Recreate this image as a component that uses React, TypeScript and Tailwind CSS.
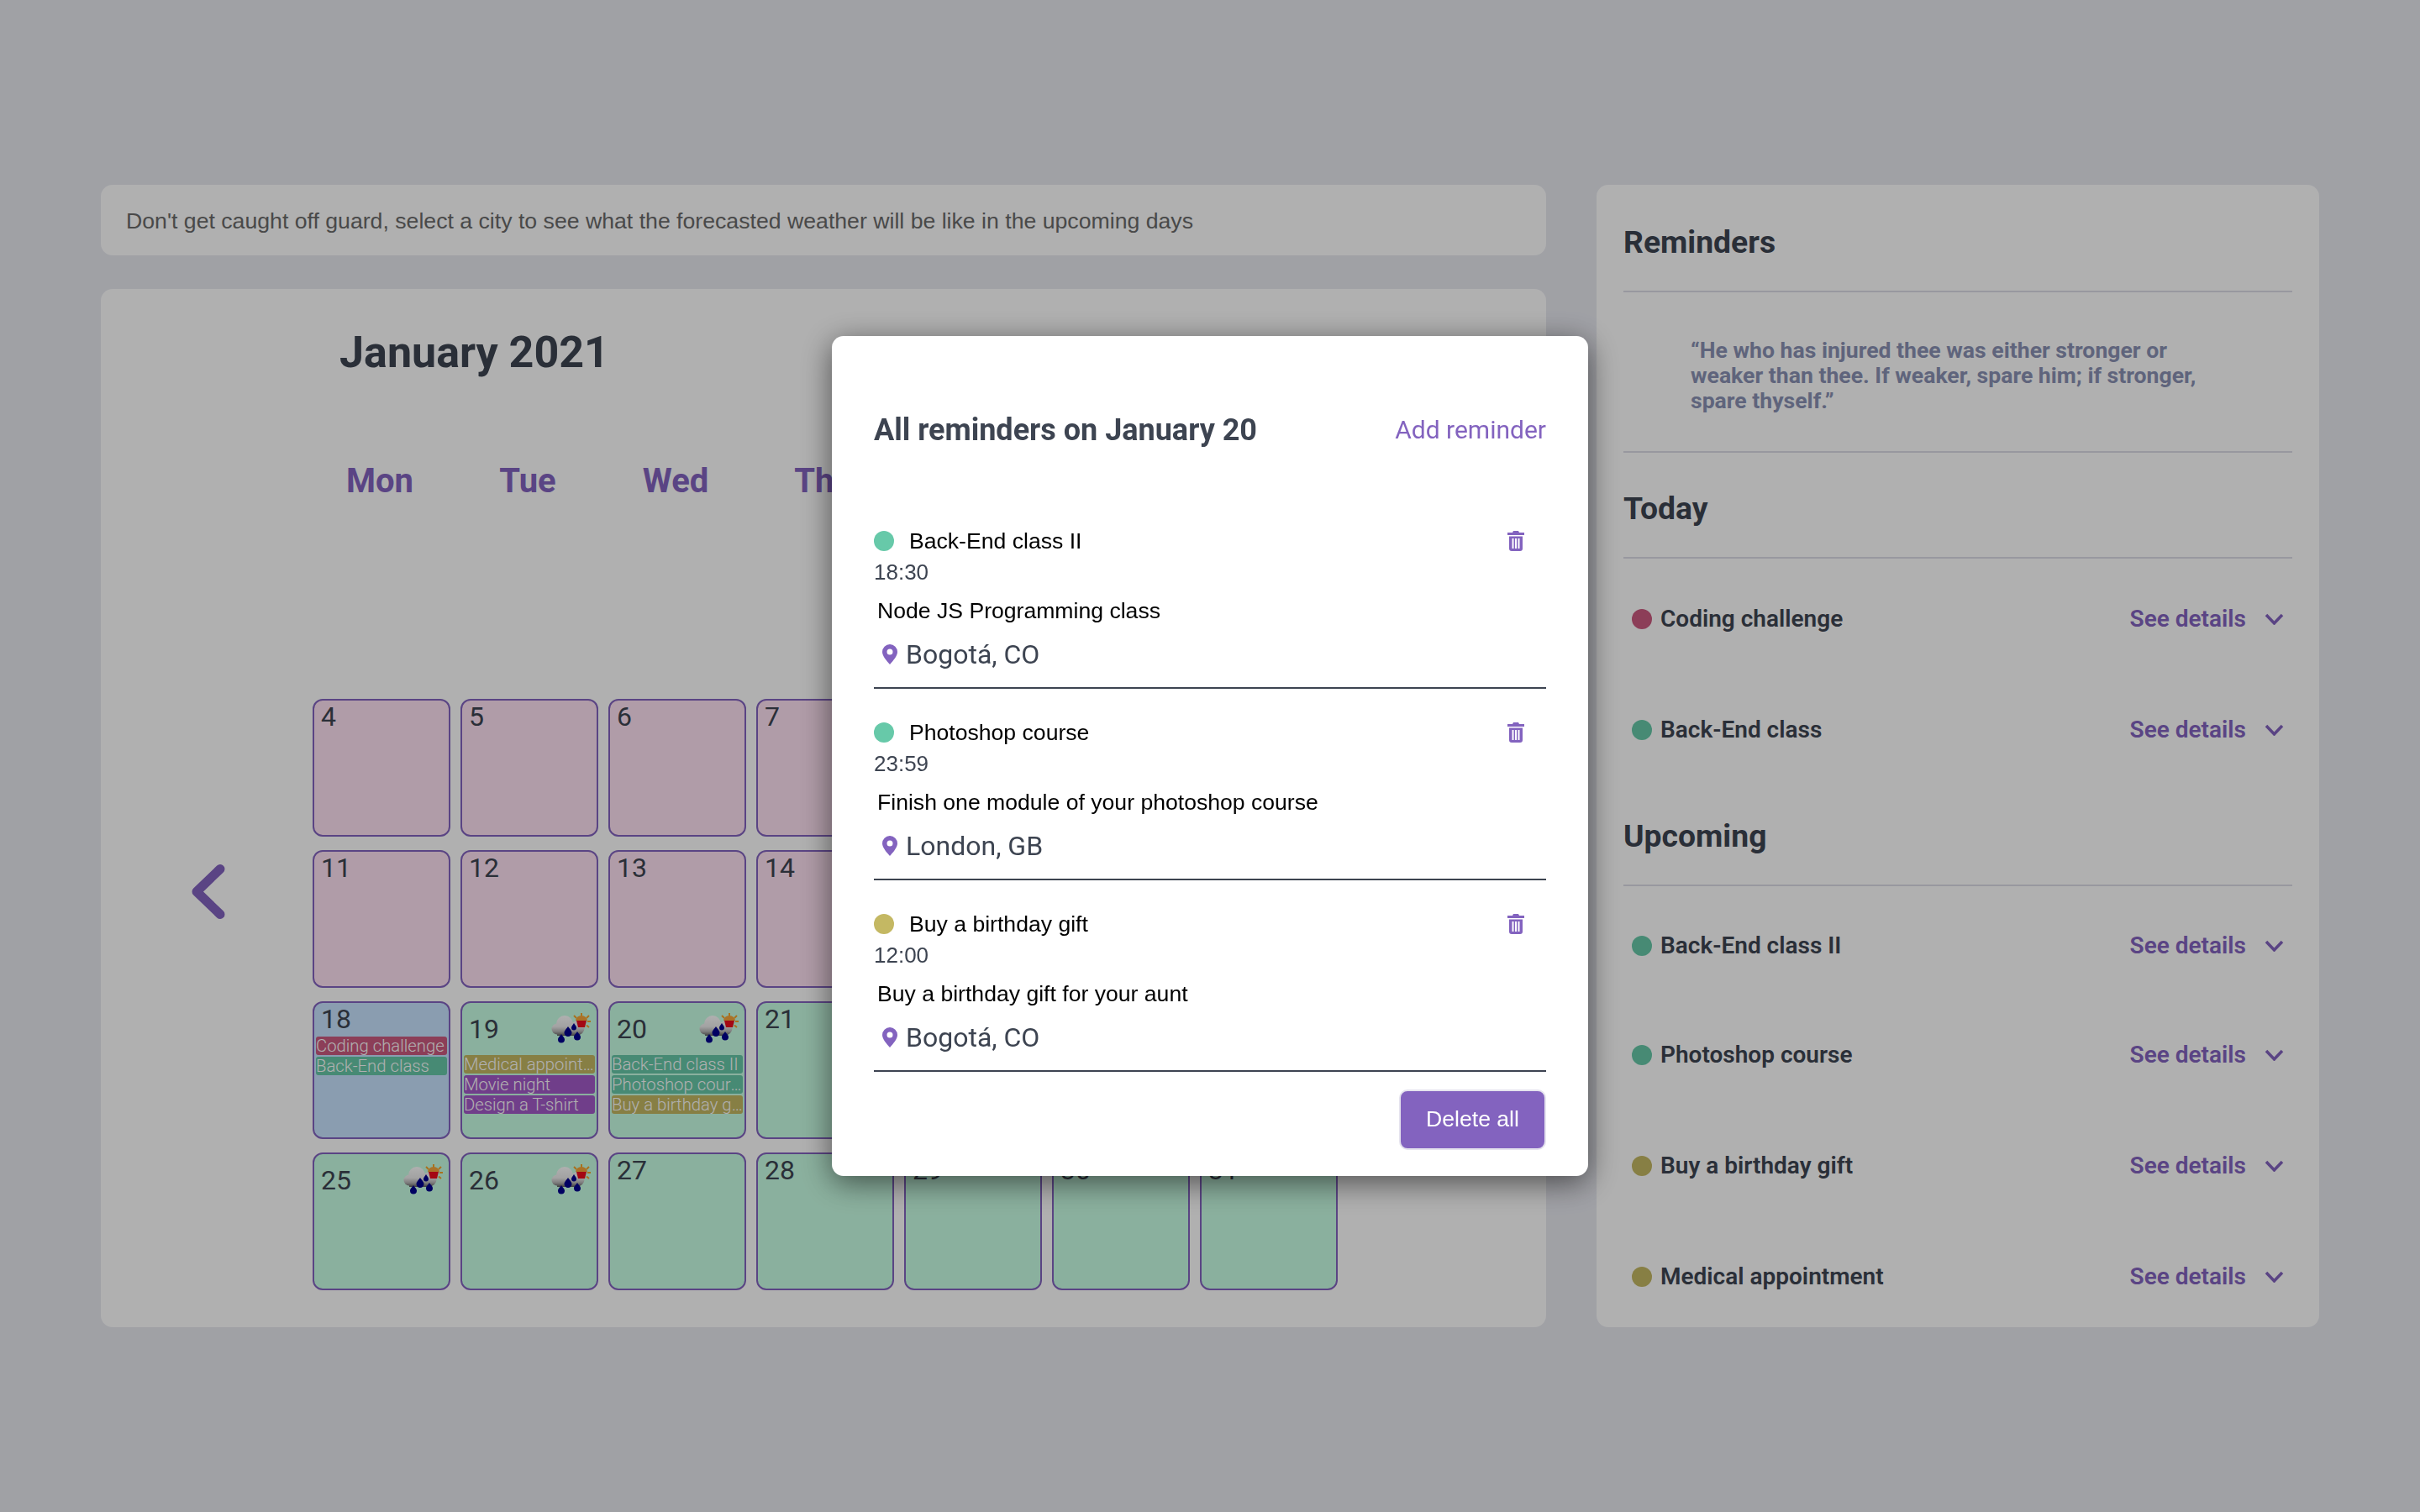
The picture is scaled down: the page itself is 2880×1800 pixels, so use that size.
import React from 'react';

const font = { fontFamily: 'Roboto, sans-serif' };
const arial = { fontFamily: '"Liberation Sans", sans-serif' };

type Ev = { label: string; color: string };

const week = ['Mon', 'Tue', 'Wed', 'Thu', 'Fri', 'Sat', 'Sun'];

const events: Record<number, Ev[]> = {
  18: [
    { label: 'Coding challenge', color: 'bg-[#cb5a80]' },
    { label: 'Back-End class', color: 'bg-[#67c9a9]' },
  ],
  19: [
    { label: 'Medical appointment', color: 'bg-[#c4b863]' },
    { label: 'Movie night', color: 'bg-[#a35bc8]' },
    { label: 'Design a T-shirt', color: 'bg-[#a35bc8]' },
  ],
  20: [
    { label: 'Back-End class II', color: 'bg-[#67c9a9]' },
    { label: 'Photoshop course', color: 'bg-[#67c9a9]' },
    { label: 'Buy a birthday gift', color: 'bg-[#c4b863]' },
  ],
};

const rainy = [19, 20, 25, 26];

// rain + sun icon, the original is a small blurry bitmap
const WeatherIcon = ({ id }: { id: number }) => (
  <svg width="48" height="38" viewBox="0 0 48 38" className="shrink-0">
    <defs>
      <linearGradient id={`cloud${id}`} gradientUnits="userSpaceOnUse" x1="0" y1="3" x2="0" y2="27">
        <stop offset="0" stopColor="#ffffff" />
        <stop offset="0.55" stopColor="#ececec" />
        <stop offset="0.8" stopColor="#b4b4b4" />
        <stop offset="1" stopColor="#5c5c5c" />
      </linearGradient>
      <filter id={`soft${id}`}>
        <feGaussianBlur stdDeviation="0.5" />
      </filter>
    </defs>
    <g filter={`url(#soft${id})`}>
      <g stroke="#f5a52c" strokeWidth="2">
        <path d="M36 0v4M27 3l3 3M45 3l-3 3M47 10h-4M45 17l-3-2.500M38 20l-1-3" />
      </g>
      <path d="M29 9a7 6 0 0 1 14 0z" fill="#f6a63a" />
      <circle cx="16" cy="13" r="10" fill={`url(#cloud${id})`} />
      <circle cx="7" cy="19" r="6.500" fill={`url(#cloud${id})`} />
      <circle cx="31" cy="18" r="8.500" fill={`url(#cloud${id})`} />
      <path d="M7 14h24v13H7z" fill={`url(#cloud${id})`} />
      <path d="M30 9h12l-2 8h-8z" fill="#ee0f1c" />
      <g fill="#06068f">
        <path d="M27 12c2 3 3 4 3 5.500a3 3 0 0 1-6 0c0-1.500 1-2.500 3-5.500z" />
        <path d="M20 16c3 4 4.500 5.500 4.500 7.500a4.500 4.500 0 0 1-9 0c0-2 1.500-3.500 4.500-7.500z" />
        <path d="M31 22c2.500 3.500 4 4.500 4 6.500a4 4 0 0 1-8 0c0-2 1.500-3 4-6.500z" />
        <path d="M12 25c2.500 3.500 4 4.500 4 6.500a4 4 0 0 1-8 0c0-2 1.500-3 4-6.500z" />
      </g>
    </g>
  </svg>
);

const DayCell = ({ day }: { day: number }) => {
  const tone = day === 18 ? 'bg-[#c8e4ff]' : day < 18 ? 'bg-[#ffe2f3]' : 'bg-[#c9ffe5]';
  const evs = events[day] || [];
  const hasWeather = rainy.includes(day);
  return (
    <div className={`h-[164px] rounded-[12px] border-2 border-[#8363bf] overflow-hidden ${tone}`}>
      {hasWeather ? (
        <div className="flex h-[62px] items-center justify-between pl-[8px] pr-[6px]">
          <span className="text-[32px] leading-[38px] font-normal text-[#3d4451]">{day}</span>
          <WeatherIcon id={day} />
        </div>
      ) : (
        <div className="h-[40px] pl-[8px] text-[32px] leading-[38px] font-normal text-[#3d4451]">{day}</div>
      )}
      <div className="flex flex-col gap-[2px] px-[2px]">
        {evs.map((e) => (
          <div
            key={e.label}
            className={`h-[22px] truncate rounded-[3px] text-[20.3px] leading-[22px] font-light text-white ${e.color}`}
          >
            {e.label}
          </div>
        ))}
      </div>
    </div>
  );
};

const Chevron = () => (
  <svg width="23" height="14" viewBox="0 0 23 14" fill="none" stroke="#8363bf" strokeWidth="3.500" className="shrink-0">
    <path d="M2 2l9.500 10L21 2" />
  </svg>
);

const ReminderRow = ({ label, color, rowClass }: { label: string; color: string; rowClass: string }) => (
  <div className={`flex h-[32px] items-center pl-[10px] pr-[10px] ${rowClass}`}>
    <span className={`h-[24px] w-[24px] rounded-full ${color}`} />
    <span className="ml-[10px] text-[28px] leading-[32px] font-semibold text-[#3d4451]">{label}</span>
    <span className="ml-auto text-[28px] leading-[32px] font-semibold text-[#8363bf]">See details</span>
    <span className="ml-[22px]">
      <Chevron />
    </span>
  </div>
);

const Trash = () => (
  <svg width="20" height="24" viewBox="0 0 20 24">
    <path d="M7 0h6l1 2h6v3H0V2h6z" fill="#8363bf" />
    <path
      fillRule="evenodd"
      d="M2 6.500h16V21a3 3 0 0 1-3 3H5a3 3 0 0 1-3-3zM5.500 9v12h2V9zM9 9v12h2V9zM12.500 9v12h2V9z"
      fill="#8363bf"
    />
  </svg>
);

const Pin = () => (
  <svg width="18" height="24" viewBox="0 0 18 24" className="shrink-0">
    <path
      fillRule="evenodd"
      d="M9 0a9 9 0 0 1 9 9c0 5-5 10.500-9 15C5 19.500 0 14 0 9a9 9 0 0 1 9-9zm0 5.500a3.500 3.500 0 1 0 0 7 3.500 3.500 0 0 0 0-7z"
      fill="#8363bf"
    />
  </svg>
);

const ModalItem = ({
  dot,
  title,
  time,
  desc,
  place,
}: {
  dot: string;
  title: string;
  time: string;
  desc: string;
  place: string;
}) => (
  <div className="mb-[40px] border-b-2 border-[#3d4451] pb-[17px] last:mb-0">
    <div className="flex h-[24px] items-center">
      <span className={`h-[24px] w-[24px] rounded-full ${dot}`} />
      <span className="ml-[18px] text-[26.6px] leading-[24px] text-black" style={arial}>
        {title}
      </span>
      <span className="ml-auto mr-[26px] flex">
        <Trash />
      </span>
    </div>
    <div className="mt-[9px] text-[26px] leading-[32px] text-[#3d4451]" style={arial}>
      {time}
    </div>
    <div className="ml-[4px] mt-[13px] text-[26.6px] leading-[34px] text-black" style={arial}>
      {desc}
    </div>
    <div className="ml-[10px] mt-[13px] flex h-[44px] items-center gap-[10px]">
      <Pin />
      <span className="text-[32px] leading-[44px] font-normal text-[#3d4451]">{place}</span>
    </div>
  </div>
);

export default function App() {
  const days: (number | null)[] = [null, null, null, null];
  for (let d = 1; d <= 31; d++) days.push(d);

  return (
    <div className="relative h-[1800px] w-[2880px] overflow-hidden bg-[#e8e9f0]" style={font}>
      <div className="flex gap-[60px] px-[120px] pt-[220px]">
        {/* Calendar column */}
        <div className="flex w-[1720px] flex-col gap-[40px]">
          <div className="flex h-[84px] items-center rounded-[14px] bg-white px-[30px] pt-[2px] text-[26.67px] text-[#6b6b6b]" style={arial}>
            Don't get caught off guard, select a city to see what the forecasted weather will be like in the upcoming days
          </div>
          <div className="h-[1236px] rounded-[14px] bg-white">
            <h1 className="ml-[284px] pt-[44px] text-[52px] leading-[64px] font-bold text-[#3d4451]">January 2021</h1>
            <div className="flex">
              <div className="w-[252px] shrink-0 pl-[106px] pt-[576px]">
                <svg width="44" height="68" viewBox="0 0 44 68" fill="none" stroke="#8363bf" strokeWidth="11" strokeLinecap="round" strokeLinejoin="round">
                  <path d="M36 6.500L8 33.500l28 27" />
                </svg>
              </div>
              <div className="w-[1220px] shrink-0">
                <div className="mt-[97px] grid grid-cols-[repeat(7,164px)] gap-x-[12px] pr-[4px]">
                  {week.map((w) => (
                    <div key={w} className="-ml-[4px] text-center text-[40px] leading-[48px] font-bold text-[#8363bf]">
                      {w}
                    </div>
                  ))}
                </div>
                <div className="mt-[55px] grid grid-cols-[repeat(7,164px)] gap-x-[12px] gap-y-[16px]">
                  {days.map((d, i) => (d ? <DayCell key={i} day={d} /> : <div key={i} className="h-[164px]" />))}
                </div>
              </div>
              <div className="pl-[94px] pt-[576px]">
                <svg width="44" height="68" viewBox="0 0 44 68" fill="none" stroke="#8363bf" strokeWidth="11" strokeLinecap="round" strokeLinejoin="round">
                  <path d="M8 6.500l28 27-28 27" />
                </svg>
              </div>
            </div>
          </div>
        </div>

        {/* Reminders column */}
        <div className="h-[1360px] w-[860px] rounded-[14px] bg-white px-[32px] text-[#3d4451]">
          <div className="flex h-[128px] items-end border-b-2 border-[#dcdde6] pb-[34px]">
            <h2 className="text-[37.3px] leading-[48px] font-bold">Reminders</h2>
          </div>
          <div className="h-[191px] border-b-2 border-[#dcdde6] pl-[80px] pr-[110px] pt-[54px] text-[26.6px] leading-[30px] font-bold text-[#8a92b4]">
            “He who has injured thee was either stronger or weaker than thee. If weaker, spare him; if stronger, spare thyself.”
          </div>
          <div className="flex h-[126px] items-end border-b-2 border-[#dcdde6] pb-[34px]">
            <h2 className="text-[37.3px] leading-[48px] font-bold">Today</h2>
          </div>
          <ReminderRow label="Coding challenge" color="bg-[#cb5a80]" rowClass="mt-[56px]" />
          <ReminderRow label="Back-End class" color="bg-[#67c9a9]" rowClass="mt-[100px]" />
          <div className="flex h-[170px] items-end border-b-2 border-[#dcdde6] pb-[34px]">
            <h2 className="text-[37.3px] leading-[48px] font-bold">Upcoming</h2>
          </div>
          <ReminderRow label="Back-End class II" color="bg-[#67c9a9]" rowClass="mt-[55px]" />
          <ReminderRow label="Photoshop course" color="bg-[#67c9a9]" rowClass="mt-[98px]" />
          <ReminderRow label="Buy a birthday gift" color="bg-[#c4b863]" rowClass="mt-[100px]" />
          <ReminderRow label="Medical appointment" color="bg-[#c4b863]" rowClass="mt-[100px]" />
        </div>
      </div>

      {/* Modal */}
      <div className="fixed inset-0 flex items-center justify-center bg-black/[0.31]">
        <div className="h-[1000px] w-[900px] rounded-[14px] bg-white px-[50px] pt-[90px] shadow-[0_8px_36px_rgba(0,0,0,0.55)]">
          <div className="flex h-[44px] items-center justify-between">
            <h3 className="text-[36px] leading-[44px] font-bold text-[#3d4451]">All reminders on January 20</h3>
            <span className="text-[30px] leading-[44px] font-normal text-[#8363bf]">Add reminder</span>
          </div>
          <div className="mt-[98px]">
            <ModalItem dot="bg-[#67c9a9]" title="Back-End class II" time="18:30" desc="Node JS Programming class" place="Bogotá, CO" />
            <ModalItem dot="bg-[#67c9a9]" title="Photoshop course" time="23:59" desc="Finish one module of your photoshop course" place="London, GB" />
            <ModalItem dot="bg-[#c4b863]" title="Buy a birthday gift" time="12:00" desc="Buy a birthday gift for your aunt" place="Bogotá, CO" />
          </div>
          <div className="mt-[21px] flex justify-end">
            <button className="h-[72px] w-[175px] rounded-[10px] border-2 border-[#e5e3ee] bg-[#8363bf] text-[26.6px] text-white" style={arial}>
              Delete all
            </button>
          </div>
        </div>
      </div>
    </div>
  );
}
